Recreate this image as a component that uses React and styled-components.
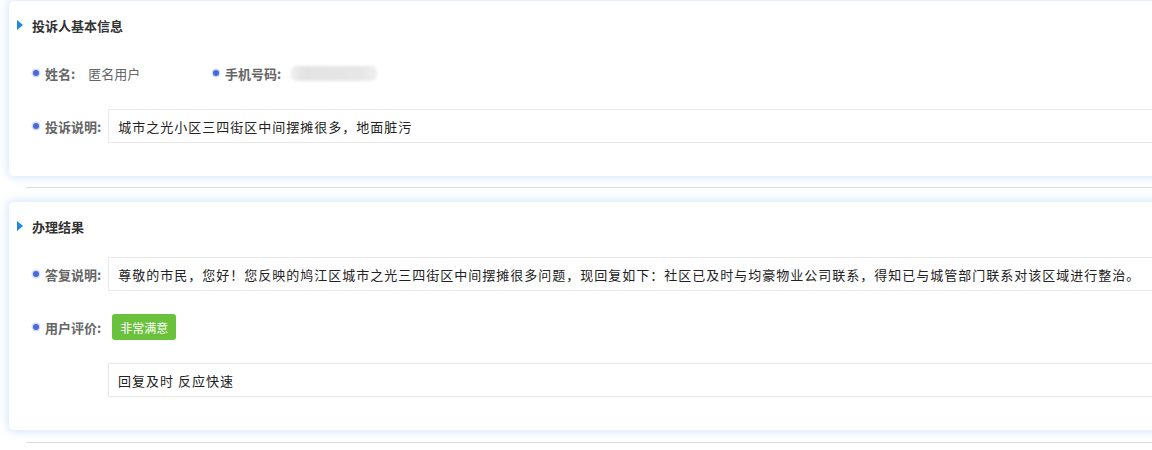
import React from "react";
import styled, { createGlobalStyle } from "styled-components";

const GlobalStyle = createGlobalStyle`
  body {
    margin: 0;
    background: #fff;
    font-family: "Noto Sans CJK SC", "Liberation Sans", sans-serif;
    font-size: 13px;
  }
`;

const Page = styled.div`
  width: 1152px;
  height: 450px;
  overflow: hidden;
  padding: 1px 0 0 9px;
  box-sizing: border-box;
`;

const Card = styled.section`
  margin-right: -40px;
  background: #fff;
  border-radius: 5px;
  box-shadow: 0 0 8px 2px rgba(200, 222, 250, 0.7);
  padding: 12px 0 33px 0;
  display: flex;
  flex-direction: column;
  gap: 19px;
`;

const Header = styled.div`
  height: 24px;
  display: flex;
  align-items: center;
  padding-left: 8px;
  gap: 9px;
  font-weight: bold;
  color: #333;
`;

const Triangle = styled.span`
  width: 0;
  height: 0;
  border-top: 5px solid transparent;
  border-bottom: 5px solid transparent;
  border-left: 6px solid #1e88e5;
`;

const Row = styled.div`
  height: 34px;
  display: flex;
  align-items: center;
  padding-left: 23px;
`;

const Item = styled.div`
  display: flex;
  align-items: center;
  width: ${(p) => p.$width || "auto"};
`;

const Dot = styled.span`
  width: 6px;
  height: 6px;
  border-radius: 50%;
  background: #4a6bd6;
  box-shadow: 0 0 0 1.5px #d3dcf4;
  margin: 0 6px 0 1px;
  flex-shrink: 0;
`;

const Label = styled.span`
  font-weight: bold;
  color: #666;
  margin-right: ${(p) => p.$gap || "7px"};
  white-space: nowrap;
`;

const Value = styled.span`
  color: #666;
`;

const Blur = styled.span`
  display: inline-block;
  width: 86px;
  height: 15px;
  margin-left: 2px;
  background: linear-gradient(90deg, #efefef 0%, #e3e3e3 15%, #e6e6e6 80%, #f0f0f0 100%);
  border-radius: 5px;
  filter: blur(1.5px);
`;

const Box = styled.div`
  flex: 1;
  height: 34px;
  box-sizing: border-box;
  border: 1px solid #eaeaea;
  display: flex;
  align-items: center;
  padding-left: 9px;
  color: #222;
  letter-spacing: 1px;
  white-space: nowrap;
  margin-left: ${(p) => p.$indent || "0"};
`;

const Tag = styled.span`
  margin-left: 4px;
  height: 26px;
  width: 64px;
  border-radius: 3px;
  background: #6ac13c;
  color: #fff;
  font-size: 12px;
  display: flex;
  align-items: center;
  justify-content: center;
`;

const Divider = styled.div`
  height: 1px;
  background: #dcdcdc;
  margin: ${(p) => p.$margin};
  margin-left: 17px;
`;

export default function App() {
  return (
    <Page>
      <GlobalStyle />
      <Card>
        <Header>
          <Triangle />
          投诉人基本信息
        </Header>
        <Row>
          <Item $width="180px">
            <Dot />
            <Label $gap="13px">姓名:</Label>
            <Value>匿名用户</Value>
          </Item>
          <Item>
            <Dot />
            <Label $gap="8px">手机号码:</Label>
            <Blur />
          </Item>
        </Row>
        <Row>
          <Dot />
          <Label>投诉说明:</Label>
          <Box>城市之光小区三四街区中间摆摊很多，地面脏污</Box>
        </Row>
      </Card>
      <Divider $margin="11px 0 14px" />
      <Card>
        <Header>
          <Triangle />
          办理结果
        </Header>
        <Row>
          <Dot />
          <Label>答复说明:</Label>
          <Box>
            尊敬的市民，您好！您反映的鸠江区城市之光三四街区中间摆摊很多问题，现回复如下：社区已及时与均豪物业公司联系，得知已与城管部门联系对该区域进行整治。
          </Box>
        </Row>
        <Row>
          <Dot />
          <Label>用户评价:</Label>
          <Tag>非常满意</Tag>
        </Row>
        <Row>
          <Box $indent="76px">回复及时 反应快速</Box>
        </Row>
      </Card>
      <Divider $margin="12px 0 0" />
    </Page>
  );
}
